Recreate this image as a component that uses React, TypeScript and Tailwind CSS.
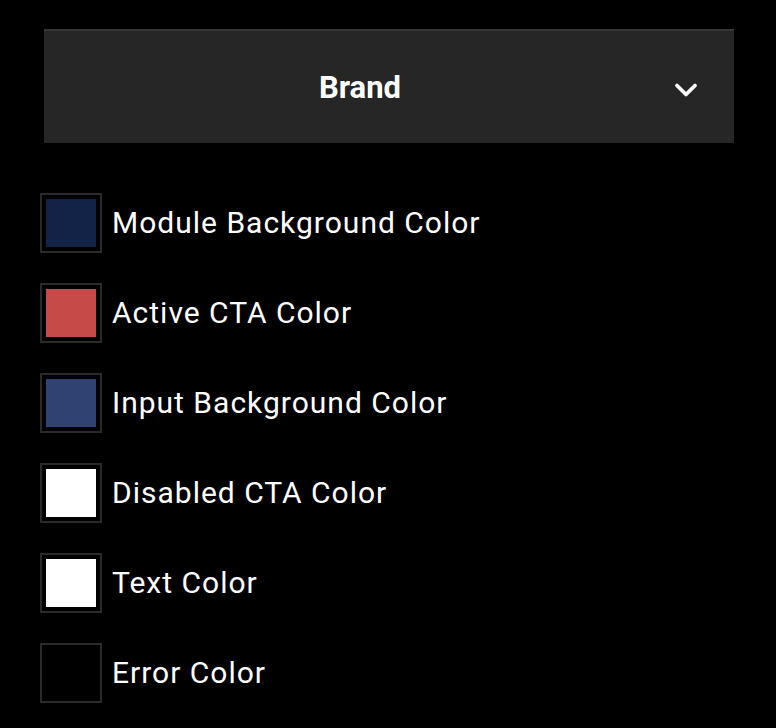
import { ChevronDown } from 'lucide-react'

const swatches = [
  { label: 'Module Background Color', color: 'bg-[#132247]' },
  { label: 'Active CTA Color', color: 'bg-[#c64a47]' },
  { label: 'Input Background Color', color: 'bg-[#304272]' },
  { label: 'Disabled CTA Color', color: 'bg-white' },
  { label: 'Text Color', color: 'bg-white' },
  { label: 'Error Color', color: 'bg-black' },
]

export default function App() {
  return (
    <div className="min-h-screen bg-black pt-[29px] px-[40px] text-white font-['Roboto',sans-serif]">
      <div className="ml-[4px] mr-[2px] h-[114px] bg-[#262626] border-t-2 border-[#363636] flex items-center">
        <span className="flex-1 text-center text-[31px] font-bold leading-none">Brand</span>
        <div className="w-[58px] flex mt-[5px]">
          <ChevronDown size={36} strokeWidth={2.5} className="-ml-[8px]" />
        </div>
      </div>

      <div className="mt-[50px] flex flex-col gap-[30px]">
        {swatches.map(s => (
          <div key={s.label} className="flex items-center">
            <div className="w-[62px] h-[60px] border-2 border-[#2a2a2a] p-[4px]">
              <div className={`w-full h-full ${s.color}`} />
            </div>
            <span className="ml-[10px] text-[30px] tracking-[1px] leading-none">{s.label}</span>
          </div>
        ))}
      </div>
    </div>
  )
}
